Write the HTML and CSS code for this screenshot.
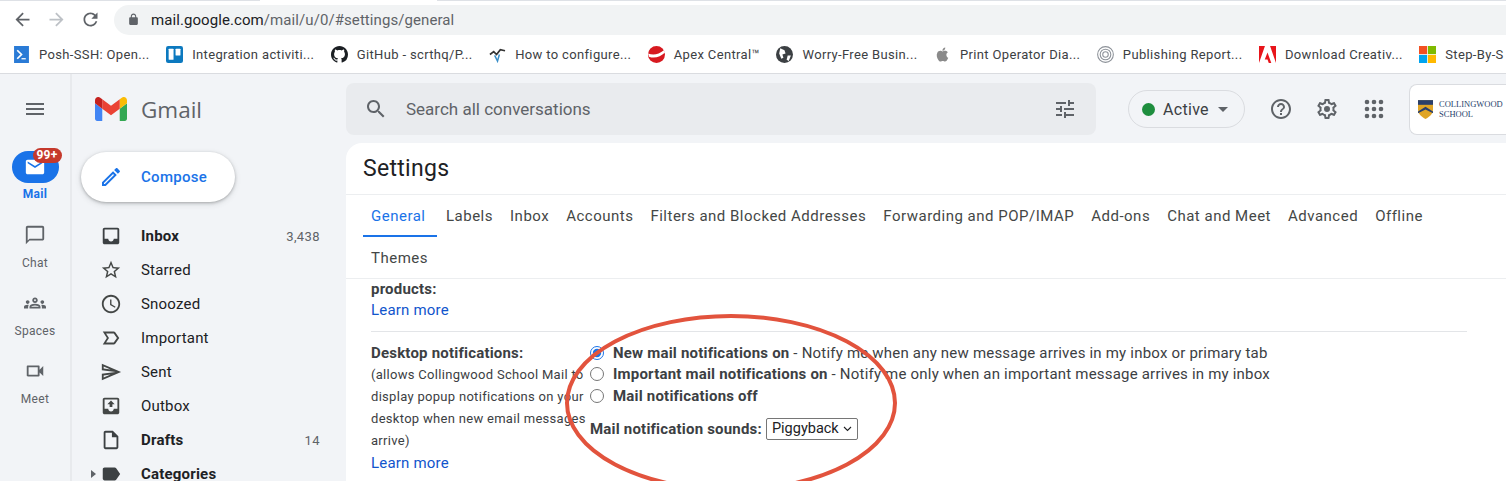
FILE: index.html
```html
<!DOCTYPE html>
<html lang="en">

<head>
    <meta charset="UTF-8">
    <title>Gmail - Settings</title>
    <link rel="stylesheet" href="styles.css">
</head>

<body>
    <div class="toolbar">
        <svg class="toolbar__btn" viewBox="0 0 24 24"><path d="M20 11H7.83l5.59-5.59L12 4l-8 8 8 8 1.41-1.41L7.83 13H20v-2z"/></svg>
        <svg class="toolbar__btn toolbar__btn-off" viewBox="0 0 24 24"><path d="M4 11h12.17l-5.59-5.59L12 4l8 8-8 8-1.41-1.41L16.17 13H4v-2z"/></svg>
        <svg class="toolbar__btn" viewBox="0 0 24 24"><path d="M17.65 6.35C16.2 4.9 14.21 4 12 4c-4.42 0-7.99 3.58-7.99 8s3.57 8 7.99 8c3.73 0 6.84-2.55 7.73-6h-2.08c-.82 2.33-3.04 4-5.65 4-3.31 0-6-2.69-6-6s2.69-6 6-6c1.66 0 3.14.69 4.22 1.78L13 11h7V4l-2.35 2.35z"/></svg>
        <div class="address">
            <svg class="address__lock" viewBox="0 0 24 24"><path fill-rule="evenodd" d="M18 8h-1V6c0-2.76-2.24-5-5-5S7 3.24 7 6v2H6c-1.1 0-2 .9-2 2v10c0 1.1.9 2 2 2h12c1.1 0 2-.9 2-2V10c0-1.1-.9-2-2-2zM9 6c0-1.66 1.34-3 3-3s3 1.34 3 3v2H9V6z"/></svg>
            <span class="address__host">mail.google.com</span><span class="address__path">/mail/u/0/#settings/general</span>
        </div>
    </div>

    <div class="bookmarks">
        <div class="bookmark">
            <svg class="bookmark__icon" viewBox="0 0 16 16"><rect x="1" y="0" width="14" height="16" fill="#2a7bd6"/><path d="M4 4l4 4-4 4" fill="none" stroke="#fff" stroke-width="1.6"/><path d="M8 12h4" stroke="#fff" stroke-width="1.2"/></svg>
            <span>Posh-SSH: Open...</span>
        </div>
        <div class="bookmark">
            <svg class="bookmark__icon" viewBox="0 0 16 16"><rect width="16" height="16" rx="2" fill="#0c79bf"/><rect x="2.5" y="2.5" width="4.6" height="10.5" rx=".6" fill="#fff"/><rect x="9" y="2.5" width="4.6" height="6.5" rx=".6" fill="#fff"/></svg>
            <span>Integration activiti...</span>
        </div>
        <div class="bookmark">
            <svg class="bookmark__icon" viewBox="0 0 16 16"><path fill="#1b1f23" d="M8 0C3.58 0 0 3.58 0 8c0 3.54 2.29 6.53 5.47 7.59.4.07.55-.17.55-.38 0-.19-.01-.82-.01-1.49-2.01.37-2.53-.49-2.69-.94-.09-.23-.48-.94-.82-1.13-.28-.15-.68-.52-.01-.53.63-.01 1.08.58 1.23.82.72 1.21 1.87.87 2.33.66.07-.52.28-.87.51-1.07-1.78-.2-3.64-.89-3.64-3.95 0-.87.31-1.59.82-2.15-.08-.2-.36-1.02.08-2.12 0 0 .67-.21 2.2.82.64-.18 1.32-.27 2-.27.68 0 1.36.09 2 .27 1.53-1.04 2.2-.82 2.2-.82.44 1.1.16 1.92.08 2.12.51.56.82 1.27.82 2.15 0 3.07-1.87 3.75-3.65 3.95.29.25.54.73.54 1.48 0 1.07-.01 1.93-.01 2.2 0 .21.15.46.55.38A8.013 8.013 0 0016 8c0-4.42-3.58-8-8-8z"/></svg>
            <span>GitHub - scrthq/P...</span>
        </div>
        <div class="bookmark">
            <svg class="bookmark__icon" viewBox="0 0 18 16"><path d="M1 8l4-3 3 3 4-5 5 1" fill="none" stroke="#333" stroke-width="1.8"/><path d="M6 9l3 6 2-7" fill="none" stroke="#3a8fc9" stroke-width="1.6"/></svg>
            <span>How to configure...</span>
        </div>
        <div class="bookmark">
            <svg class="bookmark__icon" viewBox="0 0 16 16"><circle cx="8" cy="8" r="8" fill="#d71920"/><path d="M0 7c5 2 10 1 15-3l1 2c-4 4-10 6-15 4z" fill="#fff"/></svg>
            <span>Apex Central™</span>
        </div>
        <div class="bookmark">
            <svg class="bookmark__icon" viewBox="0 0 16 16"><circle cx="8" cy="8" r="8" fill="#3c4043"/><path d="M4 2l4 2 1 3-3 1 1 3-2 1-2-5zM11 9l3 0-2 5-2-1z" fill="#fff"/></svg>
            <span>Worry-Free Busin...</span>
        </div>
        <div class="bookmark">
            <svg class="bookmark__icon" viewBox="0 0 24 24"><path fill="#8a8a8a" d="M18.71 19.5c-.83 1.24-1.71 2.45-3.05 2.47-1.34.03-1.77-.79-3.29-.79-1.53 0-2 .77-3.27.82-1.31.05-2.3-1.32-3.14-2.53C4.25 17 2.94 12.45 4.7 9.39c.87-1.52 2.43-2.48 4.12-2.51 1.28-.02 2.5.87 3.29.87.78 0 2.26-1.07 3.81-.91.65.03 2.47.26 3.64 1.98-.09.06-2.17 1.28-2.15 3.81.03 3.02 2.65 4.03 2.68 4.04-.03.07-.42 1.44-1.38 2.83M13 3.5c.73-.83 1.94-1.46 2.94-1.5.13 1.17-.34 2.35-1.04 3.19-.69.85-1.83 1.51-2.95 1.42-.15-1.15.41-2.35 1.05-3.11z"/></svg>
            <span>Print Operator Dia...</span>
        </div>
        <div class="bookmark">
            <svg class="bookmark__icon" viewBox="0 0 16 16" fill="none" stroke="#8d9299"><circle cx="8" cy="8" r="7.4"/><circle cx="8" cy="8" r="5"/><circle cx="8" cy="8" r="2.6"/></svg>
            <span>Publishing Report...</span>
        </div>
        <div class="bookmark">
            <svg class="bookmark__icon" viewBox="0 0 16 16"><path fill="#e8151b" d="M0 0h5.6L0 16zM16 0h-5.6L16 16zM8 6l3.6 10H9.2L8 12.6H5.4z"/></svg>
            <span>Download Creativ...</span>
        </div>
        <div class="bookmark">
            <svg class="bookmark__icon" viewBox="0 0 18 18"><rect width="8.6" height="8.6" fill="#f25022"/><rect x="9.4" width="8.6" height="8.6" fill="#7fba00"/><rect y="9.4" width="8.6" height="8.6" fill="#00a4ef"/><rect x="9.4" y="9.4" width="8.6" height="8.6" fill="#ffb900"/></svg>
            <span>Step-By-S</span>
        </div>
    </div>

    <div class="app">
        <div class="rail">
            <svg class="rail__menu" viewBox="0 0 24 24"><path d="M3 18h18v-2H3v2zm0-5h18v-2H3v2zm0-7v2h18V6H3z"/></svg>
            <div class="rail__item rail__item-active">
                <div class="rail__pill">
                    <svg viewBox="0 0 24 24"><path d="M20 4H4c-1.1 0-2 .9-2 2v12c0 1.1.9 2 2 2h16c1.1 0 2-.9 2-2V6c0-1.1-.9-2-2-2zm0 4l-8 5-8-5V6l8 5 8-5v2z"/></svg>
                    <span class="rail__badge">99+</span>
                </div>
                <span>Mail</span>
            </div>
            <div class="rail__item">
                <svg viewBox="0 0 24 24"><path fill-rule="evenodd" d="M20 2H4c-1.1 0-2 .9-2 2v18l4-4h14c1.1 0 2-.9 2-2V4c0-1.1-.9-2-2-2zm0 14H6l-2 2V4h16v12z"/></svg>
                <span>Chat</span>
            </div>
            <div class="rail__item">
                <svg viewBox="0 0 24 24"><path fill-rule="evenodd" d="M4 13c1.1 0 2-.9 2-2 0-1.1-.9-2-2-2s-2 .9-2 2c0 1.1.9 2 2 2zm1.13 1.1C4.76 14.04 4.39 14 4 14c-.99 0-1.93.21-2.78.58C.48 14.9 0 15.62 0 16.43V18h4.5v-1.61c0-.83.23-1.61.63-2.29zM20 13c1.1 0 2-.9 2-2 0-1.1-.9-2-2-2s-2 .9-2 2c0 1.1.9 2 2 2zm4 3.43c0-.81-.48-1.53-1.22-1.85C21.93 14.21 20.99 14 20 14c-.39 0-.76.04-1.13.1.4.68.63 1.46.63 2.29V18H24v-1.57zM12 6c-1.66 0-3 1.34-3 3s1.34 3 3 3 3-1.34 3-3-1.34-3-3-3zm0 2c.55 0 1 .45 1 1s-.45 1-1 1-1-.45-1-1 .45-1 1-1zM16.24 13.65c-1.17-.52-2.61-.9-4.24-.9s-3.07.39-4.24.9C6.68 14.13 6 15.21 6 16.39V18h12v-1.61c0-1.18-.68-2.26-1.76-2.74zM8.07 16c.09-.23.13-.39.91-.69.97-.38 1.99-.56 3.02-.56s2.05.18 3.02.56c.77.3.81.46.91.69H8.07z"/></svg>
                <span>Spaces</span>
            </div>
            <div class="rail__item">
                <svg viewBox="0 0 24 24"><path fill-rule="evenodd" d="M17 10.5V7c0-.55-.45-1-1-1H4c-.55 0-1 .45-1 1v10c0 .55.45 1 1 1h12c.55 0 1-.45 1-1v-3.5l4 4v-11l-4 4zM15 16H5V8h10v8z"/></svg>
                <span>Meet</span>
            </div>
        </div>

        <div class="nav">
            <div class="logo">
                <svg class="logo__mark" viewBox="52 42 88 66">
                    <path fill="#4285f4" d="M58 108h14V74L52 59v43c0 3.32 2.69 6 6 6"/>
                    <path fill="#34a853" d="M120 108h14c3.32 0 6-2.69 6-6V59l-20 15"/>
                    <path fill="#fbbc04" d="M120 48v26l20-15v-8c0-7.42-8.47-11.65-14.4-7.2"/>
                    <path fill="#ea4335" d="M72 74V48l24 18 24-18v26L96 92"/>
                    <path fill="#c5221f" d="M52 51v8l20 15V48l-5.6-4.2c-5.94-4.45-14.4-.22-14.4 7.2"/>
                </svg>
                <span class="logo__text">Gmail</span>
            </div>
            <div class="compose">
                <svg viewBox="0 0 24 24"><path fill-rule="evenodd" d="M3 17.25V21h3.75L17.81 9.94l-3.75-3.75L3 17.25zM5.92 19H5v-.92l9.06-9.06.92.92L5.92 19zM20.71 5.63l-2.34-2.34c-.2-.2-.45-.29-.71-.29s-.51.1-.7.29l-1.83 1.83 3.75 3.75 1.83-1.83c.39-.39.39-1.02 0-1.41z"/></svg>
                <span>Compose</span>
            </div>
            <div class="nav__list">
                <div class="nav__row nav__row-bold">
                    <svg viewBox="0 0 24 24"><path fill-rule="evenodd" d="M19 3H5c-1.1 0-2 .9-2 2v14c0 1.1.9 2 2 2h14c1.1 0 2-.9 2-2V5c0-1.1-.9-2-2-2zm0 12h-4c0 1.66-1.35 3-3 3s-3-1.34-3-3H4.99V5H19v10z"/></svg>
                    <span class="nav__label">Inbox</span><span class="nav__count">3,438</span>
                </div>
                <div class="nav__row">
                    <svg viewBox="0 0 24 24"><path fill-rule="evenodd" d="M22 9.24l-7.19-.62L12 2 9.19 8.63 2 9.24l5.46 4.73L5.82 21 12 17.27 18.18 21l-1.63-7.03L22 9.24zM12 15.4l-3.76 2.27 1-4.28-3.32-2.88 4.38-.38L12 6.1l1.71 4.04 4.38.38-3.32 2.88 1 4.28L12 15.4z"/></svg>
                    <span class="nav__label">Starred</span>
                </div>
                <div class="nav__row">
                    <svg viewBox="0 0 24 24"><path fill-rule="evenodd" d="M11.99 2C6.47 2 2 6.48 2 12s4.47 10 9.99 10C17.52 22 22 17.52 22 12S17.52 2 11.99 2zM12 20c-4.42 0-8-3.58-8-8s3.58-8 8-8 8 3.58 8 8-3.58 8-8 8zm.5-13H11v6l5.25 3.15.75-1.23-4.5-2.67z"/></svg>
                    <span class="nav__label">Snoozed</span>
                </div>
                <div class="nav__row">
                    <svg viewBox="0 0 24 24"><path fill-rule="evenodd" d="M15 19H3l4.5-7L3 5h12c.65 0 1.26.31 1.63.84L21 12l-4.37 6.16c-.37.52-.98.84-1.63.84zM6.6 17H15l3.5-5L15 7H6.6l3.2 5z"/></svg>
                    <span class="nav__label">Important</span>
                </div>
                <div class="nav__row">
                    <svg viewBox="0 0 24 24"><path fill-rule="evenodd" d="M4.01 6.03l7.51 3.22-7.52-1 .01-2.22m7.5 8.72L4 17.97v-2.22l7.51-1M2.01 3L2 10l15 2-15 2 .01 7L23 12 2.01 3z"/></svg>
                    <span class="nav__label">Sent</span>
                </div>
                <div class="nav__row">
                    <svg viewBox="0 0 24 24"><path fill-rule="evenodd" d="M19 3H5c-1.1 0-2 .9-2 2v14c0 1.1.9 2 2 2h14c1.1 0 2-.9 2-2V5c0-1.1-.9-2-2-2zm0 12h-4c0 1.66-1.35 3-3 3s-3-1.34-3-3H4.99V5H19v10zM8 10h2.5v3h3v-3H16l-4-4z"/></svg>
                    <span class="nav__label">Outbox</span>
                </div>
                <div class="nav__row nav__row-bold">
                    <svg viewBox="0 0 24 24"><path fill-rule="evenodd" d="M14 2H6c-1.1 0-1.99.9-1.99 2L4 20c0 1.1.89 2 1.99 2H18c1.1 0 2-.9 2-2V8l-6-6zm4 18H6V4h7v5h5v11z"/></svg>
                    <span class="nav__label">Drafts</span><span class="nav__count">14</span>
                </div>
                <div class="nav__row nav__row-bold">
                    <i class="nav__caret"></i>
                    <svg viewBox="0 0 24 24"><path d="M17.63 5.84C17.27 5.33 16.67 5 16 5L5 5.01C3.9 5.01 3 5.9 3 7v10c0 1.1.9 1.99 2 1.99L16 19c.67 0 1.27-.33 1.63-.84L22 12l-4.37-6.16z"/></svg>
                    <span class="nav__label">Categories</span>
                </div>
            </div>
        </div>

        <div class="main">
            <div class="topbar">
                <div class="search">
                    <svg class="search__icon" viewBox="0 0 24 24"><path fill-rule="evenodd" d="M15.5 14h-.79l-.28-.27C15.41 12.59 16 11.11 16 9.5 16 5.91 13.09 3 9.5 3S3 5.91 3 9.5 5.91 16 9.5 16c1.61 0 3.09-.59 4.23-1.57l.27.28v.79l5 4.99L20.49 19l-4.99-5zm-6 0C7.01 14 5 11.99 5 9.5S7.01 5 9.5 5 14 7.01 14 9.5 11.99 14 9.5 14z"/></svg>
                    <span class="search__text">Search all conversations</span>
                    <svg class="search__icon" viewBox="0 0 24 24"><path d="M3 17v2h6v-2H3zM3 5v2h10V5H3zm10 16v-2h8v-2h-8v-2h-2v6h2zM7 9v2H3v2h4v2h2V9H7zm14 4v-2H11v2h10zm-6-4h2V7h4V5h-4V3h-2v6z"/></svg>
                </div>
                <div class="status">
                    <i class="status__dot"></i>
                    <span>Active</span>
                    <i class="status__caret"></i>
                </div>
                <svg class="topbar__icon" viewBox="0 0 24 24"><path fill-rule="evenodd" d="M11 18h2v-2h-2v2zm1-16C6.48 2 2 6.48 2 12s4.48 10 10 10 10-4.48 10-10S17.52 2 12 2zm0 18c-4.41 0-8-3.59-8-8s3.59-8 8-8 8 3.59 8 8-3.59 8-8 8zm0-14c-2.21 0-4 1.79-4 4h2c0-1.1.9-2 2-2s2 .9 2 2c0 2-3 1.75-3 5h2c0-2.25 3-2.5 3-5 0-2.21-1.79-4-4-4z"/></svg>
                <svg class="topbar__icon" viewBox="0 0 24 24"><path fill-rule="evenodd" d="M19.43 12.98c.04-.32.07-.64.07-.98 0-.34-.03-.66-.07-.98l2.11-1.65c.19-.15.24-.42.12-.64l-2-3.46c-.09-.16-.26-.25-.44-.25-.06 0-.12.01-.17.03l-2.49 1c-.52-.4-1.08-.73-1.69-.98l-.38-2.65C14.46 2.18 14.25 2 14 2h-4c-.25 0-.46.18-.49.42l-.38 2.65c-.61.25-1.17.59-1.69.98l-2.49-1c-.06-.02-.12-.03-.18-.03-.17 0-.34.09-.43.25l-2 3.46c-.13.22-.07.49.12.64l2.11 1.65c-.04.32-.07.65-.07.98 0 .33.03.66.07.98l-2.11 1.65c-.19.15-.24.42-.12.64l2 3.46c.09.16.26.25.44.25.06 0 .12-.01.17-.03l2.49-1c.52.4 1.08.73 1.69.98l.38 2.65c.03.24.24.42.49.42h4c.25 0 .46-.18.49-.42l.38-2.65c.61-.25 1.17-.59 1.69-.98l2.49 1c.06.02.12.03.18.03.17 0 .34-.09.43-.25l2-3.46c.12-.22.07-.49-.12-.64l-2.11-1.65zm-1.98-1.71c.04.31.05.52.05.73 0 .21-.02.43-.05.73l-.14 1.13.89.7 1.08.84-.7 1.21-1.27-.51-1.04-.42-.9.68c-.43.32-.84.56-1.25.73l-1.06.43-.16 1.13-.2 1.35h-1.4l-.19-1.35-.16-1.13-1.06-.43c-.43-.18-.83-.41-1.23-.71l-.91-.7-1.06.43-1.27.51-.7-1.21 1.08-.84.89-.7-.14-1.13c-.03-.31-.05-.54-.05-.74s.02-.43.05-.73l.14-1.13-.89-.7-1.08-.84.7-1.21 1.27.51 1.04.42.9-.68c.43-.32.84-.56 1.25-.73l1.06-.43.16-1.13.2-1.35h1.39l.19 1.35.16 1.13 1.06.43c.43.18.83.41 1.23.71l.91.7 1.06-.43 1.27-.51.7 1.21-1.07.85-.89.7.14 1.13zM12 9a3 3 0 100 6 3 3 0 000-6z"/></svg>
                <svg class="topbar__icon" viewBox="0 0 24 24"><circle cx="5" cy="5" r="2.3"/><circle cx="12" cy="5" r="2.3"/><circle cx="19" cy="5" r="2.3"/><circle cx="5" cy="12" r="2.3"/><circle cx="12" cy="12" r="2.3"/><circle cx="19" cy="12" r="2.3"/><circle cx="5" cy="19" r="2.3"/><circle cx="12" cy="19" r="2.3"/><circle cx="19" cy="19" r="2.3"/></svg>
                <div class="org">
                    <svg class="org__shield" viewBox="0 0 16 20"><path fill="#e0a526" d="M0 0h16v10c0 5-4 8-8 10-4-2-8-5-8-10z"/><path fill="#2a3f6b" d="M0 0h16v5H0z"/><path fill="#2a3f6b" d="M0 12l8-5 8 5v2l-8-4-8 4z"/></svg>
                    <span class="org__name">COLLINGWOOD<br>SCHOOL</span>
                </div>
            </div>

            <div class="panel">
                <div class="panel__title">Settings</div>
                <div class="tabs">
                    <span class="tab tab-active">General</span>
                    <span class="tab">Labels</span>
                    <span class="tab">Inbox</span>
                    <span class="tab">Accounts</span>
                    <span class="tab">Filters and Blocked Addresses</span>
                    <span class="tab">Forwarding and POP/IMAP</span>
                    <span class="tab">Add-ons</span>
                    <span class="tab">Chat and Meet</span>
                    <span class="tab">Advanced</span>
                    <span class="tab">Offline</span>
                    <span class="tab">Themes</span>
                </div>
                <div class="section section-prev">
                    <div class="section__head">products:</div>
                    <a class="link">Learn more</a>
                </div>
                <div class="section section-notify">
                    <div class="section__side">
                        <div class="section__head">Desktop notifications:</div>
                        <div class="section__note">(allows Collingwood School Mail to display popup notifications on your desktop when new email messages arrive)</div>
                        <a class="link">Learn more</a>
                    </div>
                    <div class="section__opts">
                        <label class="opt"><input type="radio" name="notify" checked><span><b>New mail notifications on</b> - Notify me when any new message arrives in my inbox or primary tab</span></label>
                        <label class="opt"><input type="radio" name="notify"><span><b>Important mail notifications on</b> - Notify me only when an important message arrives in my inbox</span></label>
                        <label class="opt"><input type="radio" name="notify"><span><b>Mail notifications off</b></span></label>
                        <div class="sound">
                            <b>Mail notification sounds:</b>
                            <select class="sound__select"><option>Piggyback</option></select>
                        </div>
                    </div>
                </div>
            </div>
        </div>
    </div>

    <svg class="circle" viewBox="0 0 1506 481"><ellipse cx="731" cy="403" rx="164" ry="87"/></svg>
</body>

</html>
```

FILE: styles.css
```css
* {
    box-sizing: border-box;
}

html, body {
    margin: 0;
    height: 481px;
    overflow: hidden;
}

body {
    position: relative;
    background-color: #f2f4f7;
    font-family: Roboto, "Liberation Sans", sans-serif;
    color: #202124;
}

/* browser chrome */
.toolbar {
    display: flex;
    align-items: center;
    height: 37px;
    padding: 4px 0 2px 12px;
    background: #fff linear-gradient(90deg, #dee1e6 260px, #fff 260px, #fff 437px, #dee1e6 437px) top / 100% 1px no-repeat;
}

.toolbar__btn {
    width: 21px;
    height: 21px;
    margin-right: 13px;
    fill: #5f6368;
}

.toolbar__btn-off {
    fill: #bdc1c6;
}

.address {
    display: flex;
    align-items: center;
    flex: 1;
    height: 30px;
    padding-left: 13px;
    border-radius: 15px 0 0 15px;
    background-color: #f1f3f4;
    font-size: 15px;
    letter-spacing: .08px;
}

.address__lock {
    width: 13px;
    height: 13px;
    margin-right: 11px;
    fill: #5f6368;
}

.address__path {
    color: #5f6368;
}

.bookmarks {
    display: flex;
    align-items: center;
    height: 37px;
    padding: 0 0 2px 13px;
    gap: 16.5px;
    background-color: #fff;
    border-bottom: 1px solid #dadce0;
    font-size: 13px;
    letter-spacing: .35px;
    color: #3c4043;
    white-space: nowrap;
}

.bookmark {
    display: flex;
    align-items: center;
    gap: 9px;
}

.bookmark__icon {
    width: 17px;
    height: 17px;
}

/* gmail */
.app {
    display: flex;
    height: 407px;
}

.rail {
    display: flex;
    flex-direction: column;
    align-items: center;
    width: 72px;
    padding-top: 23px;
    border-right: 2px solid #e8eaed;
}

.rail__menu {
    width: 24px;
    height: 24px;
    fill: #5f6368;
}

.rail__item {
    display: flex;
    flex-direction: column;
    align-items: center;
    height: 68px;
    padding-top: 9px;
    font-size: 12px;
    letter-spacing: .3px;
    color: #5f6368;
}

.rail__item svg {
    width: 22px;
    height: 22px;
    fill: #5f6368;
}

.rail__item span {
    margin-top: 10px;
}

.rail__item-active {
    height: 64px;
    margin-top: 30px;
    padding-top: 0;
    font-weight: 700;
    color: #1a73e8;
}

.rail__item-active > span {
    margin-top: 4px;
}

.rail__pill {
    position: relative;
    display: flex;
    align-items: center;
    justify-content: center;
    width: 47px;
    height: 32px;
    border-radius: 16px;
    background-color: #1a73e8;
}

.rail__item .rail__pill svg {
    fill: #fff;
}

.rail__item .rail__badge {
    position: absolute;
    top: -3px;
    left: 21px;
    width: 29px;
    height: 15px;
    margin: 0;
    border-radius: 8px;
    background-color: #c5392c;
    color: #fff;
    font-size: 12px;
    line-height: 15px;
    text-align: center;
}

.nav {
    width: 274px;
}

.logo {
    display: flex;
    align-items: center;
    height: 48px;
    margin-top: 11px;
    padding-left: 23px;
}

.logo__mark {
    width: 32px;
    height: 24px;
}

.logo__text {
    margin-left: 14px;
    font-family: "Open Sans", Roboto, sans-serif;
    font-size: 22.5px;
    color: #5f6368;
}

.compose {
    display: flex;
    align-items: center;
    width: 154px;
    height: 50px;
    margin: 19px 0 0 9px;
    padding-left: 18px;
    border-radius: 25px;
    background-color: #fff;
    box-shadow: 0 1px 3px rgba(60, 64, 67, .35), 0 2px 6px rgba(60, 64, 67, .15);
    color: #1a73e8;
    font-size: 15px;
    font-weight: 500;
    letter-spacing: .3px;
}

.compose svg {
    width: 24px;
    height: 24px;
    margin-right: 18px;
    fill: #1a73e8;
}

.nav__list {
    margin-top: 17px;
}

.nav__row {
    position: relative;
    display: flex;
    align-items: center;
    height: 34px;
    padding-left: 28px;
    font-size: 15px;
    letter-spacing: .2px;
}

.nav__row svg {
    width: 22px;
    height: 22px;
    margin-right: 19px;
    fill: #444746;
}

.nav__row-bold {
    font-weight: 700;
}

.nav__row-bold svg {
    fill: #3c4043;
}

.nav__label {
    flex: 1;
}

.nav__count {
    width: 60px;
    margin-right: 26px;
    text-align: right;
    font-size: 13px;
    font-weight: 400;
    letter-spacing: .4px;
    color: #5f6368;
}

.nav__caret {
    position: absolute;
    left: 19px;
    border-left: 5px solid #5f6368;
    border-top: 4px solid transparent;
    border-bottom: 4px solid transparent;
}

.main {
    flex: 1;
    min-width: 0;
}

.topbar {
    display: flex;
    align-items: center;
    height: 69px;
    padding-top: 9px;
    padding-bottom: 8px;
}

.search {
    display: flex;
    align-items: center;
    flex-shrink: 0;
    width: 750px;
    height: 52px;
    padding: 0 19px 0 18px;
    border-radius: 8px;
    background-color: #e9ebee;
}

.search__icon {
    width: 24px;
    height: 24px;
    fill: #5f6368;
}

.search__text {
    flex: 1;
    margin-left: 18px;
    font-size: 17px;
    color: #5f6368;
}

.status {
    display: flex;
    align-items: center;
    flex-shrink: 0;
    width: 117px;
    height: 38px;
    margin-left: 32px;
    padding-left: 13px;
    border: 1px solid #dadce0;
    border-radius: 19px;
    font-size: 16px;
    letter-spacing: .3px;
    color: #3c4043;
}

.status__dot {
    width: 13px;
    height: 13px;
    margin-right: 8px;
    border-radius: 50%;
    background-color: #1e8e3e;
}

.status__caret {
    margin-left: 9px;
    border-top: 5px solid #5f6368;
    border-left: 5px solid transparent;
    border-right: 5px solid transparent;
}

.topbar__icon {
    flex-shrink: 0;
    width: 24px;
    height: 24px;
    margin-left: 22px;
    fill: #5f6368;
}

.topbar__icon:first-of-type {
    margin-left: 24px;
}

.topbar__icon:last-of-type {
    margin-left: 23px;
}

.org {
    display: flex;
    align-items: center;
    flex: 1;
    min-width: 0;
    height: 51px;
    margin-left: 23px;
    padding-left: 8px;
    border: 1px solid #dadce0;
    border-right: 0;
    border-radius: 8px 0 0 8px;
    background-color: #fff;
}

.org__shield {
    width: 15px;
    height: 19px;
    margin-right: 6px;
}

.org__name {
    font-family: "Liberation Serif", serif;
    font-size: 8.5px;
    line-height: 10px;
    color: #2a3f6b;
}

.panel {
    height: 338px;
    overflow: hidden;
    border-radius: 16px 0 0 0;
    background-color: #fff;
}

.panel__title {
    height: 52px;
    padding-left: 17px;
    font-size: 23px;
    line-height: 52px;
    letter-spacing: .3px;
    border-bottom: 1px solid #eceef0;
}

.tabs {
    display: flex;
    flex-wrap: wrap;
    padding: 0 60px 0 17px;
    border-bottom: 1px solid #eceef0;
    font-size: 15px;
    letter-spacing: .5px;
    color: #444746;
}

.tab {
    height: 41.5px;
    padding: 0 8px;
    margin-right: 1px;
    line-height: 42px;
}

.tab-active {
    width: 74px;
    color: #1a73e8;
    border-bottom: 2px solid #1a73e8;
}

.section {
    margin: 0 39px 0 25px;
}

.section-prev {
    height: 53px;
    border-bottom: 1px solid #e3e5e8;
    font-size: 15px;
}

.section__head {
    font-size: 15px;
    font-weight: 700;
    letter-spacing: .2px;
    line-height: 20px;
    color: #3c4043;
}

.link {
    color: #1155cc;
    font-size: 15px;
    line-height: 22px;
    letter-spacing: .2px;
}

.section-prev .link {
    display: block;
}

.section-notify {
    display: flex;
    padding-top: 11px;
}

.section__side {
    width: 219px;
    flex-shrink: 0;
}

.section__note {
    margin-top: 1px;
    font-size: 13px;
    line-height: 22px;
    letter-spacing: .3px;
    color: #3c4043;
}

.section__opts {
    margin-top: -1px;
    font-size: 15px;
    letter-spacing: .2px;
    color: #3c4043;
}

.opt {
    display: flex;
    align-items: center;
    height: 21.5px;
    white-space: nowrap;
}

.opt input {
    width: 14px;
    height: 14px;
    margin: 0 9px 0 0;
    accent-color: #1a73e8;
}

.sound {
    display: flex;
    align-items: center;
    gap: 4px;
    margin-top: 11px;
}

.sound__select {
    width: 92px;
    height: 22px;
    padding-left: 5px;
    appearance: none;
    border: 1px solid #767676;
    border-radius: 2px;
    background: #fff url("data:image/svg+xml,%3Csvg xmlns='http://www.w3.org/2000/svg' width='9' height='6'%3E%3Cpath d='M1 1l3.5 3.5L8 1' fill='none' stroke='%23202124' stroke-width='1.1'/%3E%3C/svg%3E") no-repeat right 5px center;
    font-family: Roboto, sans-serif;
    font-size: 14.5px;
    color: #202124;
}

/* red ring drawn on the screenshot */
.circle {
    position: absolute;
    top: 0;
    left: 0;
    width: 1506px;
    height: 481px;
    fill: none;
    stroke: #e2533d;
    stroke-width: 4;
    pointer-events: none;
}
```
